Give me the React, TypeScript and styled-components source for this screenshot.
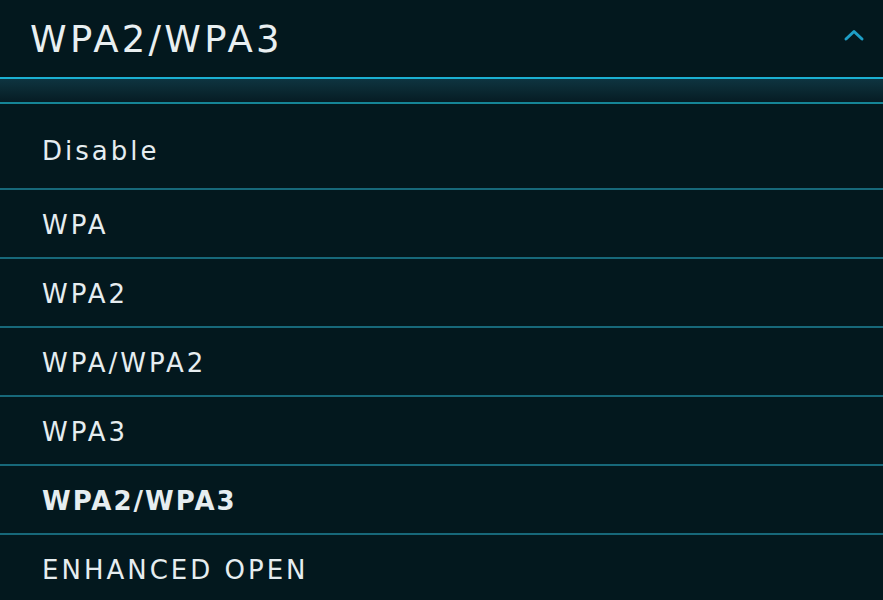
import styled, { createGlobalStyle } from "styled-components";

const GlobalStyle = createGlobalStyle`
  html, body {
    margin: 0;
    padding: 0;
    background: #03181e;
    overflow: hidden;
  }
  body {
    font-family: "DejaVu Sans", "Liberation Sans", sans-serif;
  }
`;

const Wrapper = styled.div`
  width: 883px;
  height: 600px;
  background: #03181e;
  display: flex;
  flex-direction: column;
`;

const Header = styled.div`
  height: 79px;
  flex-shrink: 0;
  display: flex;
  align-items: center;
  justify-content: space-between;
  padding: 0 18px 0 30px;
  box-sizing: border-box;
  border-bottom: 2px solid #1bb0d2;
`;

const Value = styled.span`
  color: #e9eff1;
  font-size: 37px;
  letter-spacing: 3.3px;
  padding-top: 1px;
`;

const Chevron = styled.svg`
  width: 22px;
  height: 14px;
  margin-bottom: 8px;
`;

// the glow band under the header
const Band = styled.div`
  height: 23px;
  flex-shrink: 0;
  background: linear-gradient(180deg, #0e3440 0%, #0a2730 55%, #061c24 100%);
  border-bottom: 2px solid #158596;
`;

const List = styled.ul`
  list-style: none;
  margin: 0;
  padding: 17px 0 0;
`;

const Item = styled.li<{ $active?: boolean }>`
  display: flex;
  align-items: center;
  padding: 3px 0 0 42px;
  box-sizing: content-box;
  height: 64px;
  border-bottom: 2px solid #17687a;
  color: #e6edf0;
  font-size: 26px;
  letter-spacing: ${(p) => (p.$active ? "2px" : "3px")};
  font-weight: ${(p) => (p.$active ? 700 : 400)};
  &:first-child {
    padding: 0 0 8px 42px;
    height: 59px;
  }
  &:last-child {
    border-bottom: none;
  }
`;

const options = [
  "Disable",
  "WPA",
  "WPA2",
  "WPA/WPA2",
  "WPA3",
  "WPA2/WPA3",
  "ENHANCED OPEN",
];

function App() {
  const selected = "WPA2/WPA3";
  return (
    <Wrapper>
      <GlobalStyle />
      <Header>
        <Value>{selected}</Value>
        <Chevron viewBox="0 0 22 14">
          <path
            d="M3 11 L11 3.5 L19 11"
            fill="none"
            stroke="#1e9ec6"
            strokeWidth="3"
            strokeLinecap="round"
            strokeLinejoin="round"
          />
        </Chevron>
      </Header>
      <Band />
      <List>
        {options.map((o) => (
          <Item key={o} $active={o === selected}>
            {o}
          </Item>
        ))}
      </List>
    </Wrapper>
  );
}

export default App;
